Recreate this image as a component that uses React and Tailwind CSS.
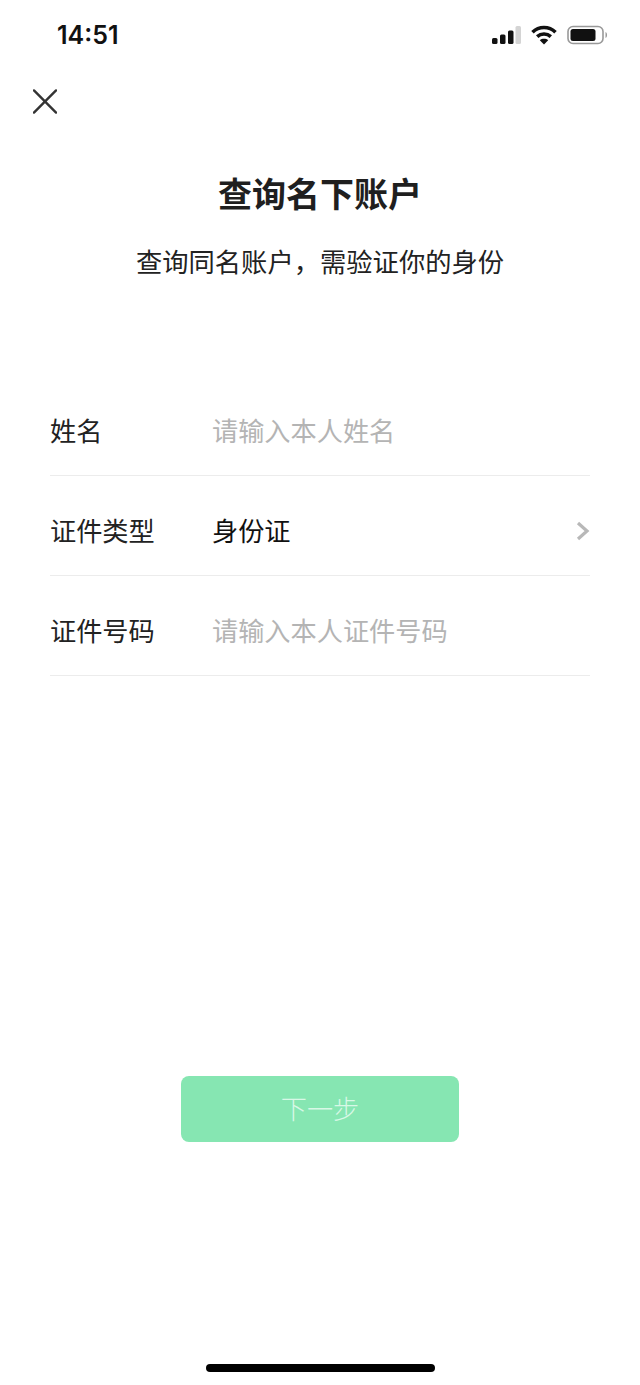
const cjk = { fontFamily: '"Noto Sans CJK SC", sans-serif' };

function Row({ label, children, right }) {
  return (
    <div className="flex items-center border-b border-[#ececec] h-[100px] pt-[10px]">
      <div className="w-[162px] shrink-0 text-[26.2px] leading-none text-[#222222]">{label}</div>
      <div className="flex-1 text-[26.2px] leading-none">{children}</div>
      {right}
    </div>
  );
}

export default function App() {
  return (
    <div className="relative flex flex-col w-[640px] h-[1385px] bg-white overflow-hidden" style={cjk}>
      <div className="flex items-center justify-between h-[70px] pl-[57px] pr-[31px]">
        <span className="text-[25px] font-semibold text-[#111111] leading-none" style={{ fontFamily: 'Inter, sans-serif' }}>14:51</span>
        <div className="flex items-center gap-[10px]">
          <svg width="30" height="20" viewBox="0 0 30 20">
            <rect x="1" y="13" width="5.5" height="6" rx="1.5" fill="#111" />
            <rect x="9" y="9.5" width="5.5" height="9.5" rx="1.5" fill="#111" />
            <rect x="17" y="5.5" width="5.5" height="13.5" rx="1.5" fill="#111" />
            <rect x="24.5" y="1" width="5.5" height="18" rx="1.5" fill="#d4d4d4" />
          </svg>
          <svg width="26" height="20" viewBox="0 0 26 20" fill="none" stroke="#111" strokeWidth="3.6">
            <path d="M1.5 7.2 C8 1 18 1 24.5 7.2" />
            <path d="M6.2 11.6 C10 8.2 16 8.2 19.8 11.6" />
            <path d="M13 19.5 L8.8 15.2 C11 13.4 15 13.4 17.2 15.2 Z" fill="#111" stroke="none" />
          </svg>
          <svg width="42" height="20" viewBox="0 0 42 20">
            <rect x="1" y="1.5" width="35" height="17" rx="5" fill="none" stroke="#999" strokeWidth="1.6" />
            <rect x="3.5" y="4" width="25" height="12" rx="2.5" fill="#111" />
            <path d="M38.5 7 C40.5 7.6 40.5 12.4 38.5 13 Z" fill="#999" />
          </svg>
        </div>
      </div>

      <div className="h-[62px] pl-[33px] pt-[19px]">
        <svg width="24" height="25" viewBox="0 0 25 25" stroke="#333" strokeWidth="2.5" strokeLinecap="round">
          <path d="M1 1 L24 24 M24 1 L1 24" />
        </svg>
      </div>

      <h1 className="text-center text-[34px] leading-[44px] font-bold text-[#1f1f1f] mt-[39px]">查询名下账户</h1>
      <p className="text-center text-[26.3px] leading-[36px] text-[#222222] mt-[28px]">查询同名账户，需验证你的身份</p>

      <div className="mx-[50px] mt-[97px]">
        <Row label="姓名"><span className="text-[#b4b4b4]">请输入本人姓名</span></Row>
        <Row
          label="证件类型"
          right={
            <svg width="14" height="20" viewBox="0 0 14 20" fill="none" stroke="#b8b8b8" strokeWidth="3.2">
              <path d="M2 2 L11 10 L2 18" />
            </svg>
          }
        >
          <span className="text-[#111111]">身份证</span>
        </Row>
        <Row label="证件号码"><span className="text-[#b4b4b4]">请输入本人证件号码</span></Row>
      </div>

      <button className="self-center w-[278px] h-[66px] mt-[400px] pb-[1px] rounded-[8px] bg-[#86e6b2] text-[26.2px] font-light text-[#d8f8e6] flex items-center justify-center">下一步</button>

      <div className="absolute left-[206px] top-[1364px] w-[229px] h-[8px] rounded-full bg-black" />
    </div>
  );
}
